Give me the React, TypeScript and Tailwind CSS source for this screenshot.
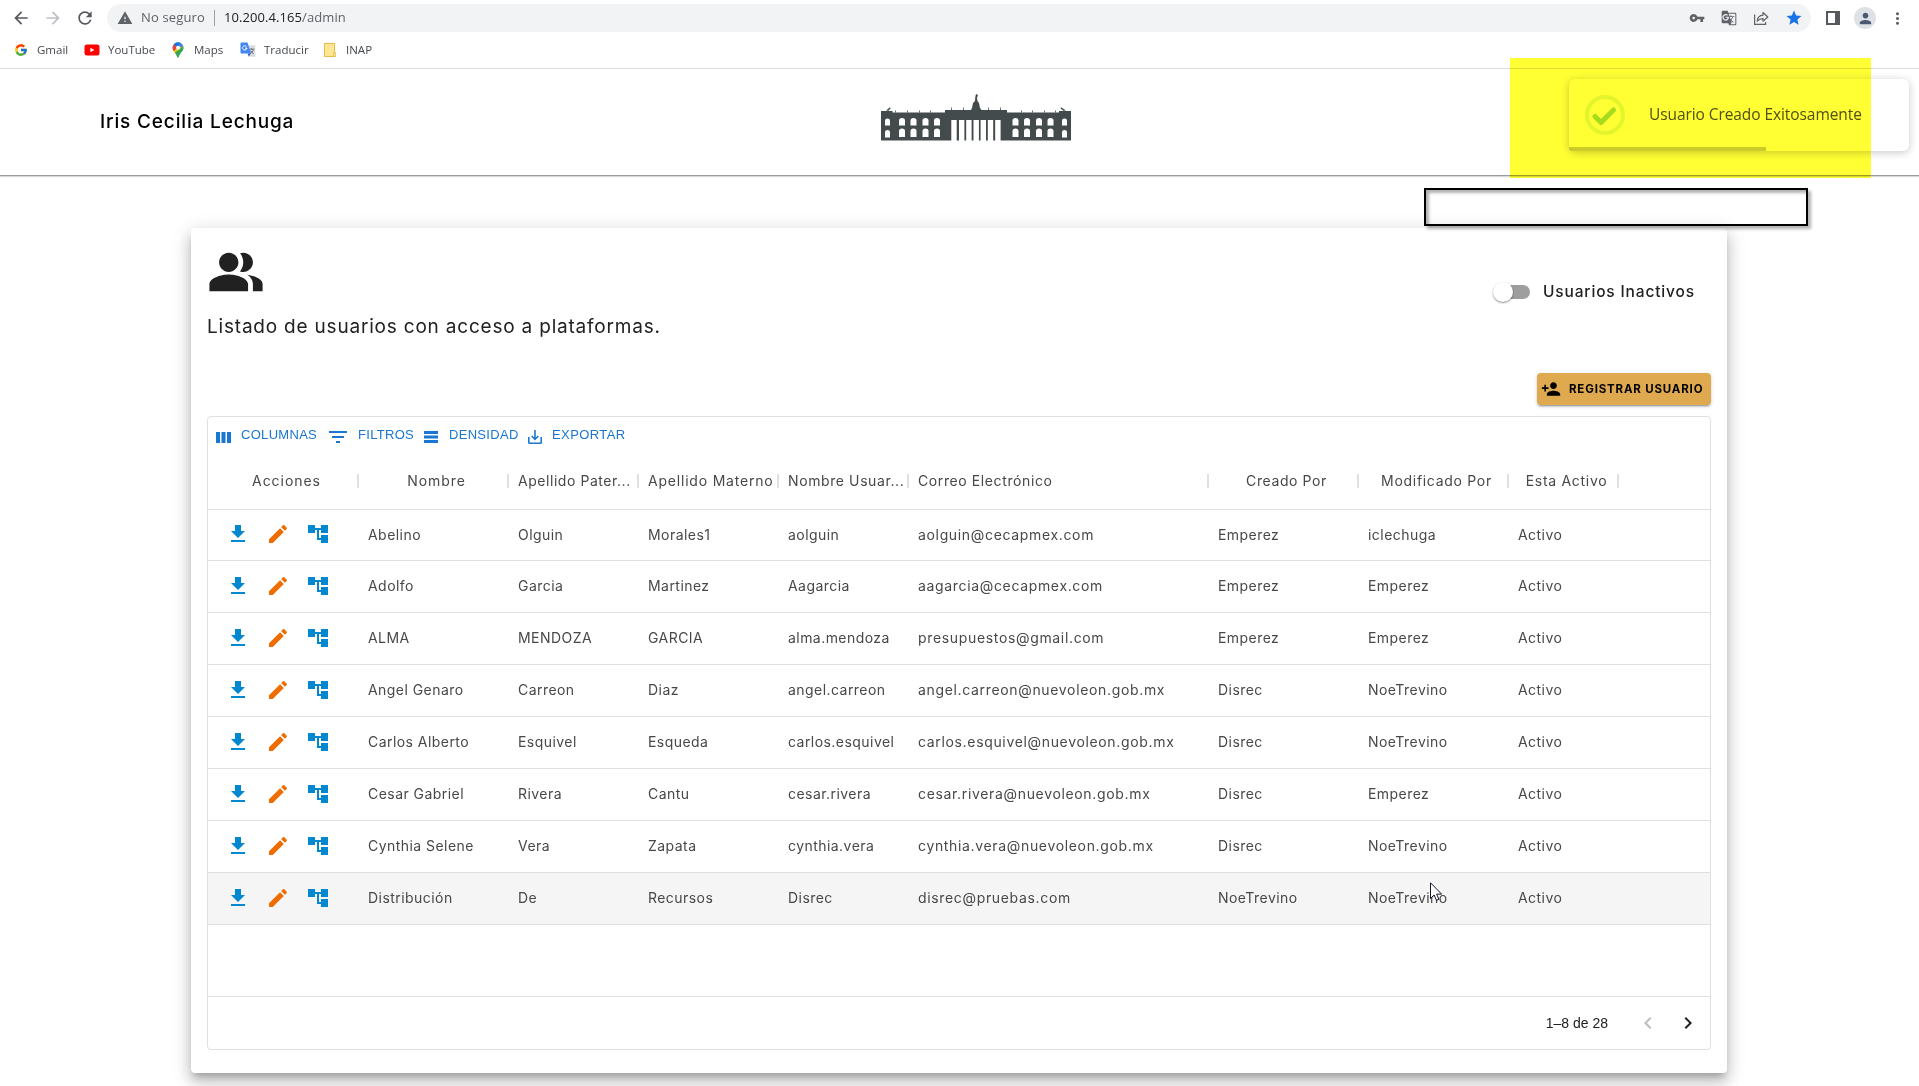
import React from "react";
import { MdArrowBack, MdArrowForward, MdRefresh, MdWarning, MdVpnKey, MdGTranslate, MdStar, MdPerson, MdMoreVert, MdPersonAddAlt1 } from "react-icons/md";
import { FcGoogle } from "react-icons/fc";

const rows: string[][] = [
  ["Abelino", "Olguin", "Morales1", "aolguin", "aolguin@cecapmex.com", "Emperez", "iclechuga", "Activo"],
  ["Adolfo", "Garcia", "Martinez", "Aagarcia", "aagarcia@cecapmex.com", "Emperez", "Emperez", "Activo"],
  ["ALMA", "MENDOZA", "GARCIA", "alma.mendoza", "presupuestos@gmail.com", "Emperez", "Emperez", "Activo"],
  ["Angel Genaro", "Carreon", "Diaz", "angel.carreon", "angel.carreon@nuevoleon.gob.mx", "Disrec", "NoeTrevino", "Activo"],
  ["Carlos Alberto", "Esquivel", "Esqueda", "carlos.esquivel", "carlos.esquivel@nuevoleon.gob.mx", "Disrec", "NoeTrevino", "Activo"],
  ["Cesar Gabriel", "Rivera", "Cantu", "cesar.rivera", "cesar.rivera@nuevoleon.gob.mx", "Disrec", "Emperez", "Activo"],
  ["Cynthia Selene", "Vera", "Zapata", "cynthia.vera", "cynthia.vera@nuevoleon.gob.mx", "Disrec", "NoeTrevino", "Activo"],
  ["Distribución", "De", "Recursos", "Disrec", "disrec@pruebas.com", "NoeTrevino", "NoeTrevino", "Activo"],
];

const headers = [
  { label: "Acciones", style: "text-center tracking-[0.95px] pl-1" },
  { label: "Nombre", style: "text-center tracking-[0.95px] pl-1" },
  { label: "Apellido Pater...", style: "text-left tracking-[0.55px] pl-2.5" },
  { label: "Apellido Materno", style: "text-left tracking-[0.8px] pl-2.5" },
  { label: "Nombre Usuar...", style: "text-left tracking-[0.6px] pl-2.5" },
  { label: "Correo Electrónico", style: "text-left tracking-[0.6px] pl-2.5" },
  { label: "Creado Por", style: "text-center tracking-[0.6px] pl-1" },
  { label: "Modificado Por", style: "text-center tracking-[0.7px] pl-1" },
  { label: "Esta Activo", style: "text-center tracking-[0.7px] pl-1" },
];

const gridCols = "grid grid-cols-[150px_150px_130px_140px_130px_300px_150px_150px_110px_1fr]";

function Icon({ d, className }: { d: string; className: string }) {
  return (
    <svg viewBox="0 0 24 24" className={className} fill="currentColor">
      <path d={d} />
    </svg>
  );
}

function YouTubeIcon() {
  return (
    <svg viewBox="0 0 16 16" className="h-4 w-4">
      <rect x="0.5" y="2.5" width="15" height="11" rx="2.5" fill="#f00" />
      <path d="M6.4 5.8v4.4L10.3 8z" fill="#fff" />
    </svg>
  );
}

function MapsIcon() {
  return (
    <svg viewBox="0 0 16 16" className="h-4 w-4">
      <clipPath id="pin">
        <path d="M8 .3a5.4 5.4 0 0 0-5.4 5.4c0 3.6 3.6 5 4.4 8.6.2.8.5 1.4 1 1.4s.8-.6 1-1.4c.8-3.6 4.4-5 4.4-8.6A5.4 5.4 0 0 0 8 .3z" />
      </clipPath>
      <g clipPath="url(#pin)">
        <rect width="16" height="16" fill="#34a853" />
        <path d="M0 9.5 8 5.7 12.5 0H16v5L5.5 11.5z" fill="#fbbc04" />
        <path d="M0 0h5L8 5.7 3.5 9 0 8z" fill="#ea4335" />
        <path d="M4.5 0h7L8 5.7 3.6 2.2z" fill="#1a73e8" />
        <path d="M10 0h6v4.5l-3.5.2L8 5.7z" fill="#4285f4" />
        <path d="M14 3.5v5L7 16 4.8 11z" fill="#34a853" />
      </g>
      <circle cx="8" cy="5.7" r="2" fill="#fff" />
    </svg>
  );
}

function TranslateIcon() {
  return (
    <svg viewBox="0 0 16 16" className="h-4 w-4">
      <path d="M6 3.2h8.3c.6 0 1 .4 1 1v9.6c0 .6-.4 1-1 1H9.8z" fill="#dadce0" />
      <path d="M9.5 7.2h4.8M11.8 6.2v1M13.4 7.4c-.5 2-1.8 3.4-3.2 4.2M10.6 8.6c.6 1.4 1.7 2.3 3 3.1" stroke="#5f6368" strokeWidth=".9" fill="none" />
      <path d="M1.5.5h6l3.5 11H1.5a1 1 0 0 1-1-1v-9a1 1 0 0 1 1-1z" fill="#4285f4" />
      <path d="M7.7 11.5H11l-2.3 3.3z" fill="#3a5bc7" />
      <path d="M6.5 4.5A2.2 2.2 0 1 0 7 6.1H5" stroke="#fff" strokeWidth="1" fill="none" />
    </svg>
  );
}

function NoteIcon() {
  return (
    <svg viewBox="0 0 16 16" className="h-4 w-4">
      <path d="M2.5 1.5h10v13h-10z" fill="#ffe694" stroke="#e5bd45" />
      <path d="M11.5 10.5h2v4h-2z" fill="#ffe694" stroke="#e5bd45" strokeWidth=".8" />
    </svg>
  );
}

function ShareIcon() {
  return (
    <svg viewBox="0 0 16 16" className="size-4" fill="none" stroke="#5f6368" strokeWidth="1.2">
      <path d="M1.6 4.5v9.9h11v-2.5" />
      <path d="M4.2 11.2C4.5 7.5 6.5 5.5 10 5.2V2.5L14.8 7 10 11.2V8.6C7.5 8.6 5.7 9.4 4.2 11.2z" strokeLinejoin="round" />
    </svg>
  );
}

function Bookmark({ icon, label, className }: { icon: React.ReactNode; label: string; className: string }) {
  return (
    <div className={`flex items-center ${className}`}>
      <span className="flex w-4 justify-center">{icon}</span>
      <span className="ml-2 whitespace-nowrap">{label}</span>
    </div>
  );
}

function Browser() {
  return (
    <div className="h-[69px] border-b border-[#dadce0] font-['Open_Sans',sans-serif]">
      <div className="flex h-9 items-center text-[#5f6368]">
        <div className="flex w-[107px] items-center gap-3 pl-[11px]">
          <MdArrowBack className="size-5 text-[#55585c]" />
          <MdArrowForward className="size-5 text-[#bdc0c4]" />
          <MdRefresh className="size-5 text-[#55585c]" />
        </div>
        <div className="flex h-7 w-[1704px] items-center rounded-full bg-[#f1f3f4] pl-2.5 pr-2">
          <MdWarning className="size-4" />
          <span className="ml-2 w-[66px] whitespace-nowrap text-[13px] tracking-[0.15px]">No seguro</span>
          <span className="ml-[7px] mr-[9px] h-4 w-px bg-[#9aa0a6]" />
          <span className="grow text-[13px] tracking-[0.08px]"><span className="text-[#202124]">10.200.4.165</span>/admin</span>
          <div className="flex items-center gap-4">
            <MdVpnKey className="size-4" />
            <MdGTranslate className="size-4" />
            <ShareIcon />
            <MdStar className="size-[18px] text-[#1a73e8]" />
          </div>
        </div>
        <span className="ml-[15px] h-3.5 w-3.5 border-2 border-r-[5px] border-[#55585c]" />
        <span className="ml-3.5 flex size-[22px] items-center justify-center rounded-full bg-[#dee1e6]">
          <MdPerson className="size-[17px] text-[#4b5873]" />
        </span>
        <MdMoreVert className="ml-[12px] size-[19px]" />
      </div>
      <div className="flex h-[27px] items-center text-[11.5px] text-[#46494d]">
        <Bookmark className="ml-[13px] w-[71px]" icon={<FcGoogle className="size-[14px]" />} label="Gmail" />
        <Bookmark className="w-[86px]" icon={<YouTubeIcon />} label="YouTube" />
        <Bookmark className="w-[70px]" icon={<MapsIcon />} label="Maps" />
        <Bookmark className="w-[82px]" icon={<TranslateIcon />} label="Traducir" />
        <Bookmark className="w-[80px]" icon={<NoteIcon />} label="INAP" />
      </div>
    </div>
  );
}

function Building() {
  const windows = [18, 29.5, 41.5, 53, 131.5, 143, 155, 166.5];
  return (
    <svg viewBox="0 0 190 48" className="h-12 w-[190px]">
      <g fill="#444b4c">
        <path d="M0 18h11.5v1.5H64V17h26l1-2 1-5 2-2 .3-4L95 1l2 1-1 3 .5 3 1.5 2 1 5 1.5 2H126v2.5h52V18h12v29.5H0z" />
        <path d="M5 17.5l4-3.2.6 1-2 2.5zM185 17.5l-5-3.2-.6 1 3 2.5z" />
        <path d="M14 17.5h.8v2H14zM26 17.5h.8v2H26zM38 17.5h.8v2H38zM49 17.5h.8v2H49zM70 14.5h.8V17H70zM82 14.5h.8V17H82zM107 14.5h.8V17h-.8zM119 14.5h.8V17h-.8zM140 17.5h.8v2h-.8zM151 17.5h.8v2h-.8zM163 17.5h.8v2h-.8zM174 17.5h.8v2h-.8z" />
      </g>
      <g fill="#fff">
        {windows.map((x) => (
          <React.Fragment key={x}>
            <path transform={`translate(${x} 25)`} d="M0 7.5V2.5Q0 0 3 0t3 2.5v5z" />
            <path transform={`translate(${x} 35.5)`} d="M0 8.5V2.5Q0 0 3 0t3 2.5v6z" />
          </React.Fragment>
        ))}
        {[4, 181].map((x) => (
          <React.Fragment key={x}>
            <path transform={`translate(${x} 25.5)`} d="M0 7V2Q0 0 2.5 0T5 2v5z" />
            <path transform={`translate(${x} 37)`} d="M0 7.5V2Q0 0 2.5 0T5 2v5.5z" />
          </React.Fragment>
        ))}
        {[70.3, 78, 85.2, 92.5, 99.6, 106.8, 114.2].map((x) => (
          <rect key={x} x={x} y="27" width="5.4" height="21" />
        ))}
      </g>
    </svg>
  );
}

function Toast() {
  return (
    <div className="absolute left-[1569px] top-[79px] flex h-[72px] w-[340px] items-center overflow-visible rounded-md bg-white shadow-[0_1px_10px_rgba(0,0,0,0.1),0_2px_8px_rgba(0,0,0,0.12)]">
      <svg viewBox="0 0 40 40" className="ml-4 size-10" fill="none">
        <circle cx="20" cy="20" r="18" stroke="#a5dc86" strokeOpacity="0.3" strokeWidth="4" />
        <path d="M10 21.5l6 6L28.5 15" stroke="#a5dc86" strokeWidth="5" strokeLinecap="round" strokeLinejoin="round" />
      </svg>
      <span className="ml-6 whitespace-nowrap font-['Open_Sans',sans-serif] text-[15.5px] font-medium tracking-[-0.08px] text-[#505050]">
        Usuario Creado Exitosamente
      </span>
      <div className="absolute bottom-0 left-0 h-1 w-[197px] rounded-bl-md bg-black/20" />
    </div>
  );
}

function GridToolbar() {
  return (
    <div className="flex h-9 items-center text-[13px] tracking-[0.3px] text-[#1976d2] font-['Liberation_Sans',sans-serif]">
      <div className="flex w-[121px] items-center pl-2">
        <svg viewBox="0 0 15 11" className="mt-1 h-[11px] w-[15px]" fill="currentColor">
          <path d="M0 0h4v11H0zM5.5 0h4v11h-4zM11 0h4v11h-4z" />
        </svg>
        <span className="ml-2.5">COLUMNAS</span>
      </div>
      <div className="flex w-[95px] items-center">
        <svg viewBox="0 0 18 12" className="mt-1 h-3 w-[18px]" fill="currentColor">
          <path d="M0 0h18v2H0zM3 5h12v2H3zM7 10h4v2H7z" />
        </svg>
        <span className="ml-[11px]">FILTROS</span>
      </div>
      <div className="flex w-[104px] items-center">
        <svg viewBox="0 0 14 12" className="mt-1 h-3 w-3.5" fill="currentColor">
          <path d="M0 0h14v3H0zM0 4.5h14v3H0zM0 9h14v3H0z" />
        </svg>
        <span className="ml-[11px]">DENSIDAD</span>
      </div>
      <div className="flex items-center">
        <svg viewBox="3 3 18 18" className="mt-1 size-3.5" fill="currentColor">
          <path d="M19 12v7H5v-7H3v7c0 1.1.9 2 2 2h14c1.1 0 2-.9 2-2v-7h-2zm-6 .67l2.59-2.58L17 11.5l-5 5-5-5 1.41-1.41L11 12.67V3h2z" />
        </svg>
        <span className="ml-[10px] tracking-[0.4px]">EXPORTAR</span>
      </div>
    </div>
  );
}

function UsersGrid() {
  return (
    <div className="mt-[11px] flex h-[634px] flex-col rounded border border-[#e0e0e0] text-[14px] tracking-[0.45px] text-[#484848]">
      <GridToolbar />
      <div className={`${gridCols} h-[57px] items-center border-b border-[#e0e0e0] pb-px`}>
        {headers.map((h) => (
          <div key={h.label} className="flex items-center">
            <div className={`grow whitespace-nowrap ${h.style}`}>{h.label}</div>
            <span className="-ml-1 -mr-px h-3.5 w-0.5 bg-[#e0e0e0]" />
          </div>
        ))}
      </div>
      {rows.map((row, i) => (
        <div key={i} className={`${gridCols} items-center border-b border-[#e0e0e0] pb-0.5 ${i === 0 ? "h-[51px]" : "h-[52px]"} ${i === 7 ? "bg-[#f5f5f5]" : ""}`}>
          <div className="flex items-center gap-4 pl-[18px]">
            <Icon className="size-6 text-[#0288d1]" d="M19 9h-4V3H9v6H5l7 7 7-7zM5 18v2h14v-2H5z" />
            <Icon className="size-6 text-[#ef6c00]" d="M3 17.25V21h3.75L17.81 9.94l-3.75-3.75L3 17.25zM20.71 7.04c.39-.39.39-1.02 0-1.41l-2.34-2.34a.9959.9959 0 0 0-1.41 0l-1.83 1.83 3.75 3.75 1.83-1.83z" />
            <Icon className="size-6 text-[#0288d1]" d="M22 11V3h-7v3H9V3H2v8h7V8h2v10h4v3h7v-8h-7v3h-2V8h2v3z" />
          </div>
          {row.map((cell, j) => (
            <div key={j} className={`whitespace-nowrap pl-2.5 ${j === 4 ? "tracking-[0.66px]" : ""}`}>{cell}</div>
          ))}
        </div>
      ))}
      <div className="grow" />
      <div className="flex h-[53px] items-center justify-end border-t border-[#e0e0e0] text-[14px] tracking-normal text-[#212121] font-['Liberation_Sans',sans-serif]">
        <span>1–8 de 28</span>
        <Icon className="ml-7 size-6 text-[#bdbdbd]" d="M15.41 7.41L14 6l-6 6 6 6 1.41-1.41L10.83 12z" />
        <Icon className="ml-4 mr-2.5 size-6 text-[#212121]" d="M10 6L8.59 7.41 13.17 12l-4.58 4.59L10 18l6-6z" />
      </div>
    </div>
  );
}

export default function App() {
  return (
    <div className="relative h-[1086px] w-[1919px] overflow-hidden bg-white font-['Inter',sans-serif]">
      <Browser />
      <header className="grid h-[107px] grid-cols-3 items-center border-b border-[#9b9b9b] shadow-[0_1px_1px_rgba(0,0,0,0.15)]">
        <h1 className="pl-[100px] text-[19px] font-medium tracking-[0.84px] text-black">Iris Cecilia Lechuga</h1>
        <div className="flex justify-center pb-[10px] pl-[33px]"><Building /></div>
      </header>

      <main className="ml-[191px] mt-[52px] h-[845px] w-[1536px] rounded bg-white px-4 shadow-[0_6px_6px_-3px_rgba(0,0,0,0.2),0_10px_14px_1px_rgba(0,0,0,0.14),0_4px_18px_3px_rgba(0,0,0,0.12)]">
        <div className="flex h-[145px] justify-between">
          <div className="pt-[15px]">
            <Icon className="size-[58px] text-[#212121]" d="M16.67 13.13C18.04 14.06 19 15.32 19 17v3h4v-3c0-2.18-3.57-3.47-6.33-3.87zM15 12c2.21 0 4-1.79 4-4s-1.79-4-4-4c-.47 0-.91.1-1.33.24C14.5 5.27 15 6.58 15 8s-.5 2.73-1.33 3.76c.42.14.86.24 1.33.24zM9 12c2.21 0 4-1.79 4-4s-1.79-4-4-4-4 1.79-4 4 1.79 4 4 4zm0 1c-2.67 0-8 1.34-8 4v3h16v-3c0-2.66-5.33-4-8-4z" />
            <p className="mt-3 text-[19px] leading-7 tracking-[0.8px] text-[#212121]">Listado de usuarios con acceso a plataformas.</p>
          </div>
          <div className="mt-11 flex h-10 items-center pr-4">
            <div className="flex h-5 w-[37px] items-center">
              <span className="relative z-10 size-5 shrink-0 rounded-full bg-white shadow-[0_1px_2px_rgba(0,0,0,0.45)]" />
              <span className="-ml-[17px] h-3.5 w-[34px] shrink-0 rounded-full bg-[#9e9e9e]" />
            </div>
            <span className="ml-[13px] text-[15.5px] font-medium tracking-[0.85px] text-[#212121]">Usuarios Inactivos</span>
          </div>
        </div>
        <div className="flex justify-end">
          <button className="flex h-8 w-[174px] items-center rounded bg-[#dfa94f] pl-1 text-black shadow-[0_3px_1px_-2px_rgba(0,0,0,0.2),0_2px_2px_rgba(0,0,0,0.14),0_1px_5px_rgba(0,0,0,0.12)]">
            <MdPersonAddAlt1 className="size-5 -scale-x-100" />
            <span className="ml-2 mt-px whitespace-nowrap text-[11.5px] font-bold tracking-[0.82px]">REGISTRAR USUARIO</span>
          </button>
        </div>
        <UsersGrid />
      </main>

      <Toast />
      <div className="absolute left-[1510px] top-[58px] h-[120px] w-[361px] bg-[#ffff33] mix-blend-multiply" />
      <div className="absolute left-[1424px] top-[188px] h-[38px] w-[384px] border-2 border-black shadow-[3px_3px_3px_rgba(0,0,0,0.3),inset_3px_3px_3px_rgba(0,0,0,0.3)]" />
      <svg viewBox="0 0 12 19" className="absolute left-[1430px] top-[882px] h-[19px] w-3">
        <path d="M.5.8v15.7l3.600-3.500 2.400 5.300 2.400-1-2.300-5.200h5z" fill="#fff" stroke="#15152a" />
      </svg>
    </div>
  );
}
